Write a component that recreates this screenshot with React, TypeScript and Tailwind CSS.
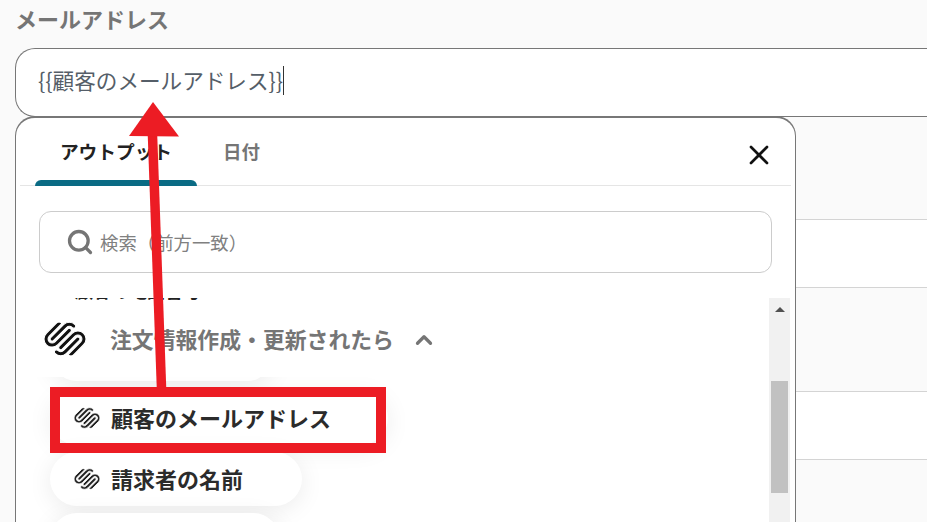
import { Search, X, ChevronUp } from "lucide-react";
import { SiSquarespace } from "react-icons/si";

const jp = { fontFamily: '"Noto Sans CJK JP", "Noto Sans", sans-serif' };

function OutputPill({ label, className }: { label: string; className: string }) {
  return (
    <div
      className={`flex h-[54px] shrink-0 items-center gap-[11px] rounded-[27px] bg-white pl-[24px] shadow-[0_4px_24px_rgba(0,0,0,0.08)] ${className}`}
    >
      <SiSquarespace className="h-[26px] w-[26px] text-[#222]" stroke="white" strokeWidth={0.8} />
      <span className="pb-[2px] text-[22px] font-bold leading-none whitespace-nowrap text-[#2b2b2b]">{label}</span>
    </div>
  );
}

export default function App() {
  return (
    <div className="relative h-[522px] w-[927px] overflow-hidden bg-[#fafafa]" style={jp}>
      <div className="h-[48px] pl-[15px] pt-[2px]">
        <h2 className="text-[22px] font-bold leading-[32px] text-[#757575]">メールアドレス</h2>
      </div>

      {/* input */}
      <div className="ml-[15px] flex h-[69px] items-center rounded-l-[20px] border-y border-l border-[#777] bg-white pl-[22px] pb-[4px]">
        <span className="text-[21.6px] text-[#555e68]">{"{{顧客のメールアドレス}}"}</span>
        <span className="h-[29px] w-px bg-[#333]" />
      </div>

      {/* rows behind the dropdown */}
      <div className="ml-[796px] h-[103px] border-b border-[#d4d4d4]" />
      <div className="ml-[796px] h-[68px] border-b border-[#d4d4d4] bg-white" />
      <div className="ml-[796px] h-[104px] border-b border-[#d4d4d4]" />
      <div className="ml-[796px] h-[68px] border-b border-[#d4d4d4] bg-white" />

      {/* dropdown */}
      <div className="absolute top-[116px] left-[15px] flex h-[420px] w-[781px] flex-col rounded-t-[20px] border-x border-t-2 border-[#777] bg-white">
        <div className="mx-[4px] flex h-[68px] shrink-0 border-b border-[#e5e5e5]">
          <div className="ml-[15px] flex h-[68px] w-[162px] flex-col">
            <span className="flex flex-1 items-center justify-center pt-[4px] text-[18.7px] font-bold text-[#222]">アウトプット</span>
            <div className="h-[6px] rounded-t-[6px] bg-[#0a6b84]" />
          </div>
          <span className="ml-[26px] self-center pt-[1px] text-[18.5px] font-bold text-[#757575]">日付</span>
          <X className="mt-[21px] ml-auto mr-[16px] h-[32px] w-[32px] text-[#111]" strokeWidth={2} />
        </div>

        <div className="mx-[23px] mt-[25px] flex h-[62px] shrink-0 items-center rounded-[12px] border border-[#ccc] pl-[26px]">
          <Search className="h-[28px] w-[28px] text-[#757575]" strokeWidth={2.8} />
          <span className="ml-[6px] pt-[1px] text-[18.4px] text-[#808080]">検索（前方一致）</span>
        </div>

        <div className="relative mt-[25px] flex min-h-0 flex-1">
          <div className="flex min-w-0 flex-1 flex-col overflow-hidden">
            <div className="h-[3px] shrink-0 overflow-hidden pl-[59px]">
              <p className="-mt-[19px] text-[18px] font-bold leading-[23px] text-[#222]">顧客の電話番号</p>
            </div>
            <div className="relative z-10 flex h-[76px] shrink-0 items-center bg-white pl-[28px]">
              <SiSquarespace className="h-[42px] w-[42px] text-[#111]" stroke="white" strokeWidth={0.6} />
              <span className="ml-[24px] text-[21.85px] font-bold text-[#757575]">注文情報作成・更新されたら</span>
              <ChevronUp className="ml-[17px] mt-[2px] h-[26px] w-[26px] text-[#757575]" strokeWidth={3} />
            </div>
            <div className="flex flex-col gap-[7px] pl-[34px]">
              <div className="-mt-[50px] h-[54px] w-[224px] shrink-0 rounded-[27px] bg-white shadow-[0_4px_24px_rgba(0,0,0,0.08)]" />
              <OutputPill label="顧客のメールアドレス" className="mt-[3px] w-[338px]" />
              <OutputPill label="請求者の名前" className="w-[252px]" />
              <div className="h-[54px] w-[230px] shrink-0 rounded-[27px] bg-white shadow-[0_4px_24px_rgba(0,0,0,0.08)]" />
            </div>
          </div>
          <div className="relative mr-[5px] w-[21px] shrink-0 bg-[#f1f1f1]">
            <div className="absolute top-[9px] left-[6px] h-0 w-0 border-x-[5px] border-b-[5px] border-x-transparent border-b-[#505050]" />
            <div className="absolute top-[83px] left-[2px] h-[112px] w-[17px] bg-[#c1c1c1]" />
          </div>
        </div>
      </div>

      {/* red annotation */}
      <div className="absolute top-[387px] left-[50px] z-20 h-[66px] w-[336px] border-[10px] border-[#ec1c24]" />
      <svg className="absolute top-0 left-0 z-20" width="927" height="522" viewBox="0 0 927 522" fill="none">
        <path d="M152.3 130 L161.5 388" stroke="#ec1c24" strokeWidth="9.5" />
        <path d="M153 102 L179 136.5 L129 136 Z" fill="#ec1c24" />
      </svg>
    </div>
  );
}
